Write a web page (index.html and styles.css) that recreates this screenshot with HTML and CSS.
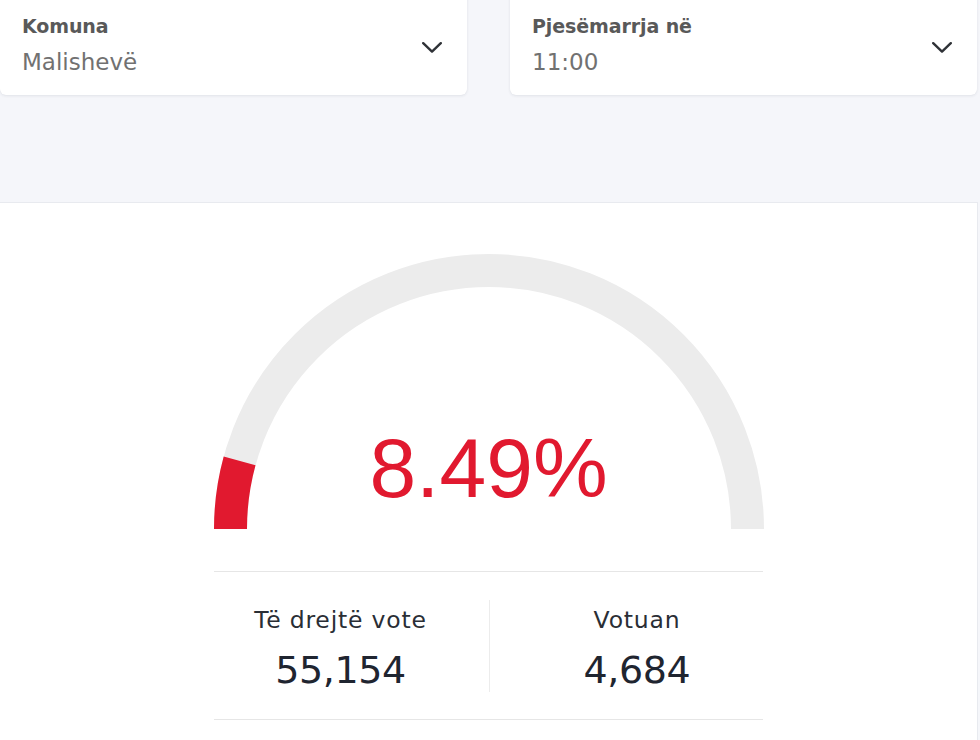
FILE: index.html
```html
<!DOCTYPE html>
<html lang="sq">
<head>
<meta charset="utf-8">
<title>Pjesëmarrja</title>
<link rel="stylesheet" href="styles.css">
</head>
<body>
  <div class="filters">
    <div class="select-card">
      <div class="select-text">
        <div class="select-label">Komuna</div>
        <div class="select-value">Malishevë</div>
      </div>
      <svg class="chevron" width="20" height="11" viewBox="0 0 20 11"><path d="M1.2 1.2 L10 9.6 L18.8 1.2" fill="none" stroke="#2f3237" stroke-width="2.4" stroke-linecap="round" stroke-linejoin="round"/></svg>
    </div>
    <div class="select-card">
      <div class="select-text">
        <div class="select-label">Pjesëmarrja në</div>
        <div class="select-value">11:00</div>
      </div>
      <svg class="chevron" width="20" height="11" viewBox="0 0 20 11"><path d="M1.2 1.2 L10 9.6 L18.8 1.2" fill="none" stroke="#2f3237" stroke-width="2.4" stroke-linecap="round" stroke-linejoin="round"/></svg>
    </div>
  </div>

  <main class="panel">
    <div class="gauge">
      <svg class="gauge-svg" width="550" height="275" viewBox="0 0 550 275">
        <path d="M16.5 275 A258.5 258.5 0 0 1 533.5 275" fill="none" stroke="#ececec" stroke-width="33"/>
        <path d="M16.5 275 A258.5 258.5 0 0 1 25.6 206.8" fill="none" stroke="#e1192f" stroke-width="33"/>
      </svg>
      <div class="gauge-value">8.49%</div>
    </div>

    <div class="summary">
      <div class="stats">
        <div class="stat">
          <div class="stat-label">Të drejtë vote</div>
          <div class="stat-number">55,154</div>
        </div>
        <div class="stat stat-right">
          <div class="stat-label">Votuan</div>
          <div class="stat-number">4,684</div>
        </div>
      </div>
    </div>
  </main>
</body>
</html>
```

FILE: styles.css
```css
html, body {
  margin: 0;
  padding: 0;
}

body {
  background: #f5f6fa;
  font-family: "DejaVu Sans", "Open Sans", sans-serif;
  width: 980px;
  height: 740px;
  overflow: hidden;
}

.filters {
  display: grid;
  grid-template-columns: 1fr 1fr;
  column-gap: 43px;
  padding-right: 3px;
  margin-top: -10px;
  height: 212px;
  box-sizing: border-box;
}

.select-card {
  height: 105px;
  box-sizing: border-box;
  background: #ffffff;
  border-radius: 6px;
  box-shadow: 0 1px 3px rgba(30, 40, 70, 0.09), 0 0 1px rgba(30, 40, 70, 0.06);
  padding: 25px 25px 0 22px;
  display: flex;
  align-items: flex-start;
  justify-content: space-between;
}

.select-label {
  font-size: 19px;
  line-height: 23px;
  font-weight: 700;
  color: #595959;
  letter-spacing: -0.1px;
}

.select-value {
  margin-top: 9.6px;
  font-size: 23px;
  line-height: 28px;
  color: #717171;
}

.chevron {
  margin-top: 27px;
  flex: none;
}

.panel {
  background: #ffffff;
  border-top: 1px solid #e8eaef;
  border-right: 1px solid #e8eaef;
  margin-right: 2px;
  height: 540px;
  padding-top: 51px;
  box-sizing: border-box;
}

.gauge {
  position: relative;
  width: 550px;
  height: 275px;
  margin: 0 auto;
}

.gauge-svg {
  display: block;
}

.gauge-value {
  position: absolute;
  left: 0;
  right: 0;
  top: 172px;
  text-align: center;
  font-family: "Liberation Sans", Arial, sans-serif;
  font-size: 84px;
  line-height: 84px;
  color: #e1192f;
}

.summary {
  width: 549px;
  margin: 42px auto 0;
  border-top: 1px solid #e6e6e6;
  border-bottom: 1px solid #e6e6e6;
  padding: 28px 0 27px;
}

.stats {
  display: grid;
  grid-template-columns: 296px 296px;
  margin: 0 -21.5px;
}

.stat {
  height: 92px;
  box-sizing: border-box;
  padding-top: 7px;
  text-align: center;
}

.stat-right {
  border-left: 1px solid #ececec;
}

.stat-label {
  font-size: 23.5px;
  line-height: 27px;
  letter-spacing: 0.8px;
  color: #2a2e35;
}

.stat-number {
  margin-top: 14px;
  font-size: 38px;
  line-height: 44px;
  color: #1f2530;
  letter-spacing: -0.4px;
}
```
